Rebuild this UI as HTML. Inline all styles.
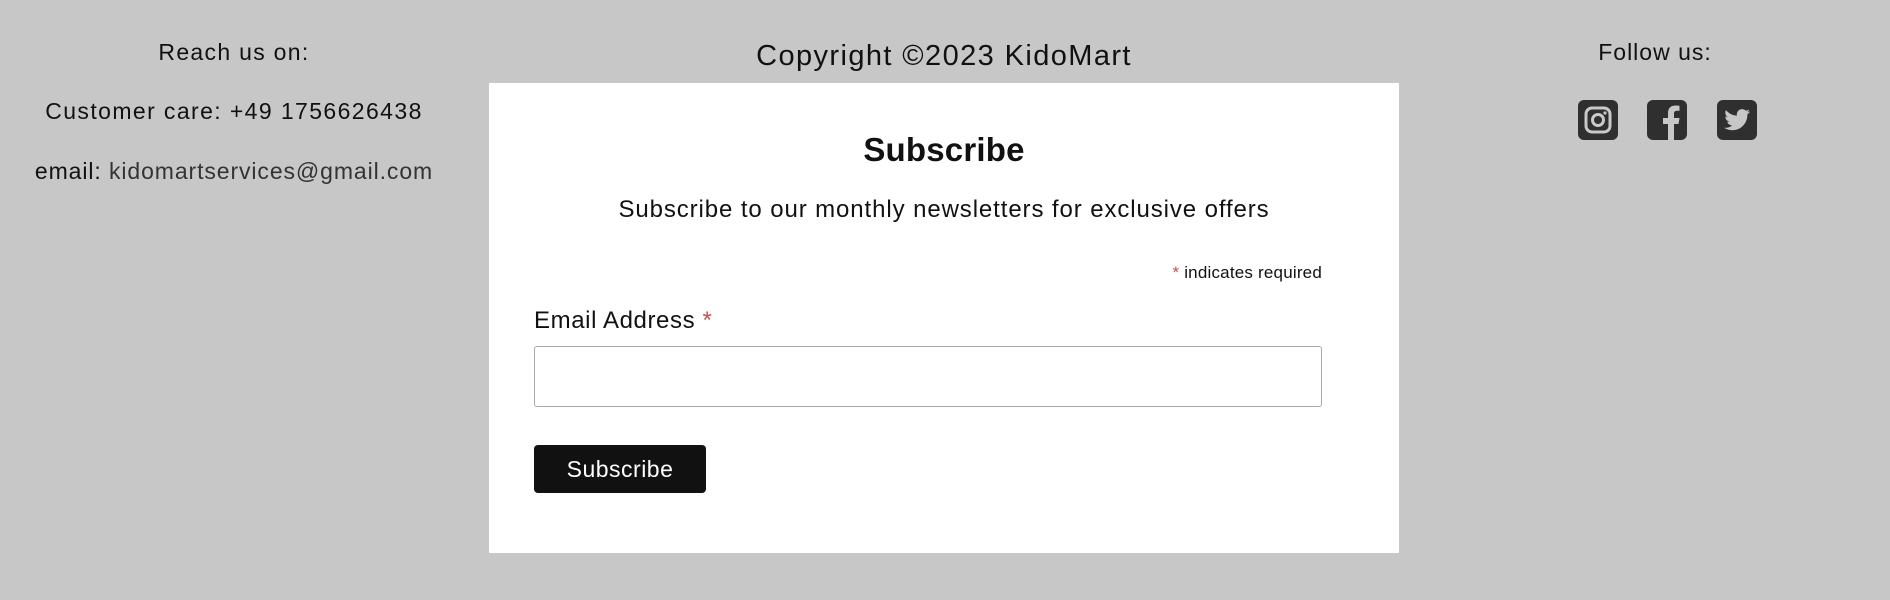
<!DOCTYPE html>
<html><head><meta charset="utf-8"><style>
html,body{margin:0;padding:0}
body{width:1890px;height:600px;background:#c6c7c6;position:relative;overflow:hidden;font-family:"Liberation Sans",sans-serif;color:#111}
.a{position:absolute;white-space:nowrap}
.c{transform:translateX(-50%)}
.box{position:absolute;left:489px;top:83px;width:910px;height:470px;background:#fff}
.ic{position:absolute;top:100px;width:40px;height:40px}
</style></head><body>
<div class="a c" style="left:234px;top:39px;font-size:23px;letter-spacing:1.3px">Reach us on:</div>
<div class="a c" style="left:234px;top:98px;font-size:23px;letter-spacing:1.4px">Customer care: +49 1756626438</div>
<div class="a c" style="left:234px;top:158px;font-size:23px;letter-spacing:0.9px">email: <span style="color:#333">kidomartservices@gmail.com</span></div>
<div class="a c" style="left:944px;top:40px;font-size:29px;letter-spacing:1.4px">Copyright ©2023 KidoMart</div>
<div class="a c" style="left:1655px;top:39px;font-size:23px;letter-spacing:1px">Follow us:</div>

<svg class="ic" style="left:1578px" viewBox="0 0 40 40"><rect width="40" height="40" rx="6" fill="#2f2f2f"/><rect x="8" y="8" width="24" height="24" rx="6" fill="none" stroke="#c9c9c9" stroke-width="3"/><circle cx="20" cy="20" r="5.5" fill="none" stroke="#c9c9c9" stroke-width="3"/><circle cx="27" cy="13" r="1.6" fill="#c9c9c9"/></svg>
<svg class="ic" style="left:1647px" viewBox="0 0 40 40"><rect width="40" height="40" rx="6" fill="#2f2f2f"/><path d="M21 40V24h-5v-6h5v-5c0-5 3-7.5 7.5-7.5 2 0 4 .3 4 .3v5h-2.5c-2.5 0-3 1.5-3 3V18h5.5l-1 6H27v16z" fill="#c6c7c6"/></svg>
<svg class="ic" style="left:1717px" viewBox="0 0 40 40"><rect width="40" height="40" rx="6" fill="#2f2f2f"/><path d="M33 11.5c-1 .5-2 .7-3 .9 1.1-.7 1.9-1.7 2.3-2.9-1 .6-2.1 1-3.3 1.3-1-1-2.4-1.7-3.9-1.7-3 0-5.3 2.4-5.3 5.3 0 .4 0 .8.1 1.2-4.4-.2-8.3-2.3-10.9-5.500-.5.8-.7 1.7-.7 2.7 0 1.8.9 3.5 2.4 4.4-.9 0-1.7-.3-2.4-.7 0 2.6 1.8 4.7 4.3 5.2-.8.2-1.600.3-2.4.1.7 2.1 2.600 3.6 5 3.7-2.3 1.8-5.3 2.6-8.2 2.3 2.4 1.5 5.2 2.4 8.2 2.4 9.8 0 15.2-8.1 15.2-15.2v-.7c1-.7 1.9-1.600 2.6-2.6z" fill="#c6c7c6"/></svg>

<div class="box"></div>
<div class="a c" style="left:944px;top:131px;font-size:33px;font-weight:bold;letter-spacing:0.2px">Subscribe</div>
<div class="a c" style="left:944px;top:196px;font-size:24px;letter-spacing:0.9px">Subscribe to our monthly newsletters for exclusive offers</div>
<div class="a" style="right:568px;top:263px;font-size:17px;letter-spacing:0.2px"><span style="color:#c0504d">*</span> indicates required</div>
<div class="a" style="left:534px;top:307px;font-size:24px;letter-spacing:0.6px">Email Address <span style="color:#c0504d">*</span></div>
<div class="a" style="left:534px;top:346px;width:786px;height:59px;border:1px solid #aaa;border-radius:3px;background:#fff"></div>
<div class="a" style="left:534px;top:445px;width:172px;height:48px;background:#111;border-radius:4px;color:#fff;font-size:23px;line-height:48px;text-align:center;letter-spacing:0.5px">Subscribe</div>
</body></html>
